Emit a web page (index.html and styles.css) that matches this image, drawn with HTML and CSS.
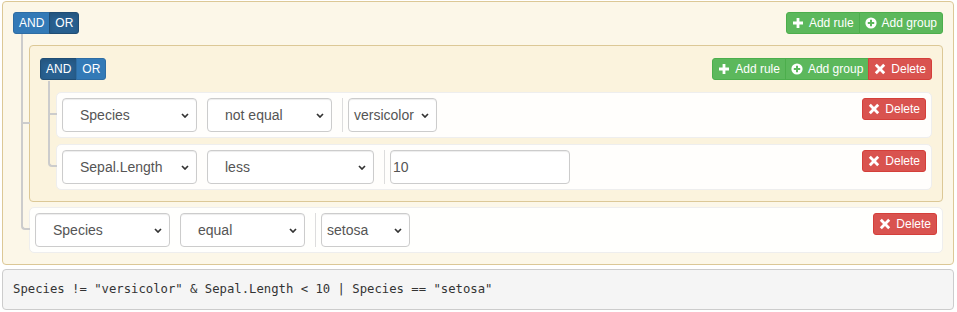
FILE: index.html
```html
<!DOCTYPE html>
<html>
<head>
  <title>Query Builder</title>
  <link rel="stylesheet" href="styles.css">
</head>
<body>
  <div class="builder">
    <div class="group">
      <div class="group-header">
        <div class="btn-group">
          <button class="btn btn-primary">AND</button>
          <button class="btn btn-primary active">OR</button>
        </div>
        <div class="btn-group">
          <button class="btn btn-success">
            <svg class="icon" viewBox="0 0 12 12"><path d="M4.6 1h2.8v3.6H11v2.8H7.4V11H4.6V7.4H1V4.6h3.6z" fill="currentColor"/></svg>
            Add rule
          </button>
          <button class="btn btn-success">
            <svg class="icon" viewBox="0 0 12 12"><circle cx="6" cy="6" r="5.6" fill="currentColor"/><path d="M5 2.8h2V5h2.2v2H7v2.2H5V7H2.8V5H5z" fill="#5cb85c"/></svg>
            Add group
          </button>
        </div>
      </div>
      <ul class="rules-list">
        <li class="group group-inner">
          <div class="group-header">
            <div class="btn-group">
              <button class="btn btn-primary active">AND</button>
              <button class="btn btn-primary">OR</button>
            </div>
            <div class="btn-group">
              <button class="btn btn-success">
                <svg class="icon" viewBox="0 0 12 12"><path d="M4.6 1h2.8v3.6H11v2.8H7.4V11H4.6V7.4H1V4.6h3.6z" fill="currentColor"/></svg>
                Add rule
              </button>
              <button class="btn btn-success">
                <svg class="icon" viewBox="0 0 12 12"><circle cx="6" cy="6" r="5.6" fill="currentColor"/><path d="M5 2.8h2V5h2.2v2H7v2.2H5V7H2.8V5H5z" fill="#5cb85c"/></svg>
                Add group
              </button>
              <button class="btn btn-danger">
                <svg class="icon" viewBox="0 0 12 12"><path d="M2.8 0.8L6 4L9.2 0.8L11.2 2.8L8 6L11.2 9.2L9.2 11.2L6 8L2.8 11.2L0.8 9.2L4 6L0.8 2.8z" fill="currentColor"/></svg>
                Delete
              </button>
            </div>
          </div>
          <ul class="rules-list">
            <li class="rule">
              <div class="rule-fields">
                <div class="select sel-filter">Species <svg class="chev" viewBox="0 0 8 5"><path d="M1 1l3 3 3-3" fill="none" stroke="#333" stroke-width="1.7"/></svg></div>
                <div class="select sel-op rule-op">not equal <svg class="chev" viewBox="0 0 8 5"><path d="M1 1l3 3 3-3" fill="none" stroke="#333" stroke-width="1.7"/></svg></div>
                <div class="rule-value">
                  <div class="select sel-value">versicolor <svg class="chev" viewBox="0 0 8 5"><path d="M1 1l3 3 3-3" fill="none" stroke="#333" stroke-width="1.7"/></svg></div>
                </div>
              </div>
              <button class="btn btn-danger rule-delete">
                <svg class="icon" viewBox="0 0 12 12"><path d="M2.8 0.8L6 4L9.2 0.8L11.2 2.8L8 6L11.2 9.2L9.2 11.2L6 8L2.8 11.2L0.8 9.2L4 6L0.8 2.8z" fill="currentColor"/></svg>
                Delete
              </button>
            </li>
            <li class="rule">
              <div class="rule-fields">
                <div class="select sel-filter">Sepal.Length <svg class="chev" viewBox="0 0 8 5"><path d="M1 1l3 3 3-3" fill="none" stroke="#333" stroke-width="1.7"/></svg></div>
                <div class="select sel-op-wide rule-op">less <svg class="chev" viewBox="0 0 8 5"><path d="M1 1l3 3 3-3" fill="none" stroke="#333" stroke-width="1.7"/></svg></div>
                <div class="rule-value">
                  <input class="value-input" type="text" value="10" readonly>
                </div>
              </div>
              <button class="btn btn-danger rule-delete">
                <svg class="icon" viewBox="0 0 12 12"><path d="M2.8 0.8L6 4L9.2 0.8L11.2 2.8L8 6L11.2 9.2L9.2 11.2L6 8L2.8 11.2L0.8 9.2L4 6L0.8 2.8z" fill="currentColor"/></svg>
                Delete
              </button>
            </li>
          </ul>
        </li>
        <li class="rule">
          <div class="rule-fields">
            <div class="select sel-filter">Species <svg class="chev" viewBox="0 0 8 5"><path d="M1 1l3 3 3-3" fill="none" stroke="#333" stroke-width="1.7"/></svg></div>
            <div class="select sel-op rule-op">equal <svg class="chev" viewBox="0 0 8 5"><path d="M1 1l3 3 3-3" fill="none" stroke="#333" stroke-width="1.7"/></svg></div>
            <div class="rule-value">
              <div class="select sel-value">setosa <svg class="chev" viewBox="0 0 8 5"><path d="M1 1l3 3 3-3" fill="none" stroke="#333" stroke-width="1.7"/></svg></div>
            </div>
          </div>
          <button class="btn btn-danger rule-delete">
            <svg class="icon" viewBox="0 0 12 12"><path d="M2.8 0.8L6 4L9.2 0.8L11.2 2.8L8 6L11.2 9.2L9.2 11.2L6 8L2.8 11.2L0.8 9.2L4 6L0.8 2.8z" fill="currentColor"/></svg>
            Delete
          </button>
        </li>
      </ul>
    </div>
    <pre class="query-output">Species != "versicolor" &amp; Sepal.Length &lt; 10 | Species == "setosa"</pre>
  </div>
</body>
</html>
```

FILE: styles.css
```css
* {
  box-sizing: border-box;
}

*::before,
*::after {
  box-sizing: border-box;
}

body {
  font-family: "Liberation Sans", Arial, sans-serif;
  font-size: 14px;
  color: #333;
  background-color: #fff;
  margin: 0;
  padding: 1px 3px 0 2px;
}

.group {
  background: rgba(250, 240, 210, 0.5);
  border: 1px solid #dcc896;
  border-radius: 4px;
  padding: 10px 10px 11px;
}

.group-inner {
  padding-top: 12px;
}

.group-header {
  display: flex;
  justify-content: space-between;
  align-items: flex-start;
  margin-bottom: 11px;
}

.group-inner > .group-header {
  margin-bottom: 12px;
}

.rules-list {
  list-style: none;
  margin: 0;
  padding: 0 0 0 16px;
  display: flex;
  flex-direction: column;
  gap: 5px;
}

.group-inner > .rules-list {
  gap: 6px;
}

.rules-list > li {
  position: relative;
}

.rules-list > li::before,
.rules-list > li::after {
  content: '';
  position: absolute;
  left: -9px;
  width: 9px;
  border-color: #ccc;
  border-style: solid;
}

.rules-list > li::before {
  top: -6px;
  height: calc(50% + 6px);
  border-width: 0 0 2px 2px;
}

.rules-list > li::after {
  top: 50%;
  height: calc(50% + 6px);
  border-width: 0 0 0 2px;
}

.rules-list > li:first-child::before {
  top: -12px;
  height: calc(50% + 12px);
}

.rules-list > li:last-child::before {
  border-radius: 0 0 0 4px;
}

.rules-list > li:last-child::after {
  display: none;
}

/* buttons */
.btn-group {
  display: inline-flex;
}

.btn {
  display: inline-flex;
  align-items: center;
  gap: 5px;
  margin: 0;
  padding: 1px 5px;
  font-family: "Liberation Sans", Arial, sans-serif;
  font-size: 12px;
  line-height: 18px;
  color: #fff;
  border: 1px solid transparent;
  border-radius: 3px;
  cursor: pointer;
}

.btn-group .btn {
  border-radius: 0;
}

.btn-group .btn + .btn {
  margin-left: -1px;
}

.btn-group .btn:first-child {
  border-radius: 3px 0 0 3px;
}

.btn-group .btn:last-child {
  border-radius: 0 3px 3px 0;
}

.btn-primary {
  background-color: #337ab7;
  border-color: #2e6da4;
}

.btn-primary.active {
  background-color: #286090;
  border-color: #204d74;
  box-shadow: inset 0 3px 5px rgba(0, 0, 0, 0.125);
}

.btn-success {
  background-color: #5cb85c;
  border-color: #4cae4c;
}

.btn-danger {
  background-color: #d9534f;
  border-color: #d43f3a;
}

.icon {
  width: 12px;
  height: 12px;
  flex: none;
}

/* rules */
.rule {
  display: flex;
  align-items: flex-start;
  background: rgba(255, 255, 255, 0.9);
  border: 1px solid #eee;
  border-radius: 5px;
  padding: 5px;
}

.rule-fields {
  display: flex;
  align-items: center;
}

.rule-delete {
  margin-left: auto;
}

.select {
  display: flex;
  align-items: center;
  justify-content: space-between;
  height: 34px;
  padding: 0 7px 0 17px;
  border: 1px solid #ccc;
  border-radius: 4px;
  background: #fff;
  color: #555;
  box-shadow: inset 0 1px 1px rgba(0, 0, 0, 0.075);
}

.chev {
  width: 8px;
  height: 5px;
  flex: none;
}

.sel-filter {
  width: 135px;
}

.sel-op {
  width: 125px;
}

.sel-op-wide {
  width: 167px;
}

.sel-value {
  width: 89px;
  padding-left: 5px;
}

.rule-op {
  margin-left: 10px;
}

.rule-value {
  display: flex;
  align-items: center;
  height: 34px;
  margin-left: 10px;
  padding-left: 5px;
  border-left: 1px solid #ddd;
}

.value-input {
  width: 180px;
  height: 34px;
  padding: 0 2px;
  font-family: "Liberation Sans", Arial, sans-serif;
  font-size: 14px;
  color: #555;
  border: 1px solid #ccc;
  border-radius: 4px;
  box-shadow: inset 0 1px 1px rgba(0, 0, 0, 0.075);
  outline: none;
}

.query-output {
  margin: 4px 0 0;
  padding: 10px;
  font-family: "DejaVu Sans Mono", "Liberation Mono", monospace;
  font-size: 12.25px;
  line-height: 19px;
  color: #333;
  background-color: #f5f5f5;
  border: 1px solid #ccc;
  border-radius: 4px;
}
```
